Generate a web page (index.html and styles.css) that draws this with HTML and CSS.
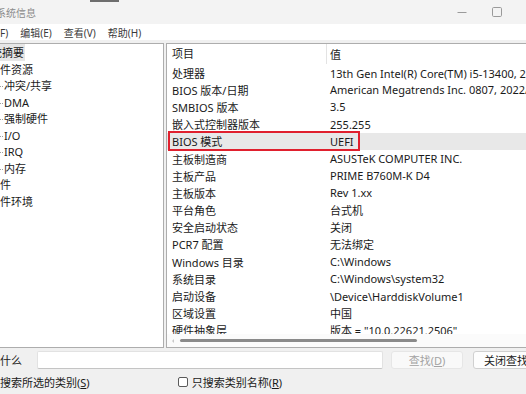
FILE: index.html
```html
<!DOCTYPE html>
<html lang="zh-CN">
<head>
<meta charset="utf-8">
<title>系统信息</title>
<link rel="stylesheet" href="styles.css">
</head>
<body>
<div class="window">
  <div class="titlebar">
    <span class="title">系统信息</span>
    <span class="grip"></span>
    <span class="spacer"></span>
    <span class="cap"><svg width="10" height="10" viewBox="0 0 10 10"><path d="M0.5 5.5H9.5" stroke="#9a9a9a" stroke-width="1"/></svg></span>
    <span class="cap"><svg width="10" height="10" viewBox="0 0 10 10"><rect x="0.5" y="0.5" width="9" height="9" rx="1.2" fill="none" stroke="#9a9a9a" stroke-width="1"/></svg></span>
    <span class="cap"></span>
  </div>
  <div class="menubar">
    <span class="menu first">文件(F)</span>
    <span class="menu">编辑(E)</span>
    <span class="menu">查看(V)</span>
    <span class="menu">帮助(H)</span>
  </div>
  <div class="main">
    <div class="tree">
      <div class="tree-inner">
        <div class="node lvl0"><span class="sel">系统摘要</span></div>
        <div class="node lvl1">硬件资源</div>
        <div class="node lvl2">冲突/共享</div>
        <div class="node lvl2">DMA</div>
        <div class="node lvl2">强制硬件</div>
        <div class="node lvl2">I/O</div>
        <div class="node lvl2">IRQ</div>
        <div class="node lvl2">内存</div>
        <div class="node lvl1">组件</div>
        <div class="node lvl1">软件环境</div>
      </div>
    </div>
    <div class="list">
      <div class="header">
        <div class="c1">项目</div>
        <div class="c2">值</div>
      </div>
      <div class="rows">
        <div class="row"><div class="c1">处理器</div><div class="c2">13th Gen Intel(R) Core(TM) i5-13400, 2500 Mhz, 10 个内核, 16 个逻辑处理器</div></div>
        <div class="row"><div class="c1">BIOS 版本/日期</div><div class="c2">American Megatrends Inc. 0807, 2022/11/10</div></div>
        <div class="row"><div class="c1">SMBIOS 版本</div><div class="c2">3.5</div></div>
        <div class="row"><div class="c1">嵌入式控制器版本</div><div class="c2">255.255</div></div>
        <div class="row selected"><div class="c1">BIOS 模式</div><div class="c2">UEFI</div><span class="mark"></span></div>
        <div class="row"><div class="c1">主板制造商</div><div class="c2">ASUSTeK COMPUTER INC.</div></div>
        <div class="row"><div class="c1">主板产品</div><div class="c2">PRIME B760M-K D4</div></div>
        <div class="row"><div class="c1">主板版本</div><div class="c2">Rev 1.xx</div></div>
        <div class="row"><div class="c1">平台角色</div><div class="c2">台式机</div></div>
        <div class="row"><div class="c1">安全启动状态</div><div class="c2">关闭</div></div>
        <div class="row"><div class="c1">PCR7 配置</div><div class="c2">无法绑定</div></div>
        <div class="row"><div class="c1">Windows 目录</div><div class="c2">C:\Windows</div></div>
        <div class="row"><div class="c1">系统目录</div><div class="c2">C:\Windows\system32</div></div>
        <div class="row"><div class="c1">启动设备</div><div class="c2">\Device\HarddiskVolume1</div></div>
        <div class="row"><div class="c1">区域设置</div><div class="c2">中国</div></div>
        <div class="row"><div class="c1">硬件抽象层</div><div class="c2">版本 = "10.0.22621.2506"</div></div>
      </div>
      <div class="hscroll">
        <span class="arrow"></span>
        <span class="thumb"></span>
      </div>
    </div>
  </div>
  <div class="find">
    <span class="label">查找什么</span>
    <span class="input"></span>
    <span class="btn disabled"><span>查找(<u>D</u>)</span></span>
    <span class="btn"><span>关闭查找</span></span>
  </div>
  <div class="checks">
    <label class="check first"><span class="box"></span><span>只搜索所选的类别(<u>S</u>)</span></label>
    <label class="check second"><span class="box"></span><span>只搜索类别名称(<u>R</u>)</span></label>
  </div>
</div>
</body>
</html>
```
FILE: styles.css
```css
* { box-sizing: border-box; }
html, body {
  margin: 0;
  padding: 0;
  width: 526px;
  height: 394px;
  overflow: hidden;
  background: #f0f0f0;
}
.window {
  font-family: "Noto Sans", "Noto Sans CJK SC", sans-serif;
  font-size: 11px;
  color: #1a1a1a;
  width: 526px;
  height: 394px;
  display: flex;
  flex-direction: column;
  overflow: hidden;
}
.titlebar {
  height: 24px;
  flex: none;
  background: #f3f3f3;
  display: flex;
  align-items: center;
  white-space: nowrap;
}
.title {
  margin-left: -4px;
  color: #8a8a8a;
  font-size: 10px;
}
.grip {
  align-self: flex-start;
  margin-left: 54px;
  width: 29px;
  height: 2px;
  background: #6e6e6e;
}
.spacer { flex: 1; }
.cap {
  width: 35px;
  height: 24px;
  display: flex;
  align-items: center;
  justify-content: center;
  flex: none;
}
.cap:last-child { width: 12px; }
.menubar {
  height: 16px;
  flex: none;
  background: #ffffff;
  display: flex;
  align-items: center;
  gap: 12px;
  white-space: nowrap;
  color: #3a3a3a;
  font-size: 10px;
}
.menu.first { margin-left: -23px; }
.main {
  margin-top: 3px;
  height: 305px;
  flex: none;
  display: flex;
  gap: 2px;
}
.tree {
  margin-left: -1px;
  width: 165px;
  flex: none;
  background: #ffffff;
  border: 1px solid #adadad;
  overflow: hidden;
  white-space: nowrap;
}
.tree-inner {
  margin-left: -40px;
  padding-top: 1px;
}
.node {
  height: 16.55px;
  line-height: 16.55px;
  position: relative;
}
.lvl0 { padding-left: 19px; }
.lvl1 { padding-left: 29px; }
.lvl2 { padding-left: 44px; }
.lvl2::before {
  content: "";
  position: absolute;
  left: 40px;
  top: 8px;
  width: 3px;
  border-top: 1px dotted #a0a0a0;
}
.sel {
  background: #e6e6e6;
  padding: 1px 1px;
}
.list {
  flex: 1;
  min-width: 0;
  background: #ffffff;
  border: 1px solid #adadad;
  border-right: none;
  display: flex;
  flex-direction: column;
  overflow: hidden;
}
.header {
  height: 20px;
  flex: none;
  display: flex;
  align-items: center;
  white-space: nowrap;
}
.header .c1 {
  border-right: 1px solid #e3e3e3;
  height: 20px;
  line-height: 20px;
}
.rows {
  flex: 1;
  min-height: 0;
  overflow: hidden;
}
.row {
  height: 17.2px;
  display: flex;
  align-items: center;
  white-space: nowrap;
  position: relative;
}
.c1 {
  width: 160px;
  flex: none;
  padding-left: 5px;
  overflow: hidden;
}
.c2 {
  padding-left: 3px;
  flex: none;
}
.row.selected { background: #e8e8e8; }
.mark {
  position: absolute;
  left: 1px;
  top: -2px;
  width: 192px;
  height: 20px;
  border: 2px solid #e0202e;
}
.hscroll {
  height: 13px;
  flex: none;
  background: #fbfbfb;
  display: flex;
  align-items: center;
}
.arrow {
  margin-left: 5px;
  width: 0;
  height: 0;
  border-top: 2px solid transparent;
  border-bottom: 2px solid transparent;
  border-right: 2px solid #c8c8c8;
}
.thumb {
  margin-left: 6px;
  width: 237px;
  height: 3px;
  border-radius: 2px;
  background: #8a8a8a;
}
.find {
  margin-top: 3px;
  height: 18px;
  flex: none;
  display: flex;
  align-items: center;
  white-space: nowrap;
}
.label {
  margin-left: -22px;
  width: 59px;
  flex: none;
}
.input {
  width: 346px;
  height: 18px;
  flex: none;
  background: #ffffff;
  border: 1px solid #e2e2e2;
  border-bottom-color: #c4c4c4;
  border-radius: 2px;
}
.btn {
  height: 18px;
  width: 72px;
  flex: none;
  display: flex;
  align-items: center;
  justify-content: center;
  border: 1px solid #d0d0d0;
  border-radius: 3px;
  background: #fdfdfd;
}
.btn.disabled {
  color: #a3a3a3;
  border-color: #e6e6e6;
  background: #f9f9f9;
  margin-left: 8px;
}
.btn + .btn { margin-left: 10px; padding-right: 6px; }
.btn u, .check u { text-decoration: underline; text-underline-offset: 1px; }
.checks {
  height: 22px;
  margin-top: 2px;
  flex: none;
  display: flex;
  align-items: center;
  white-space: nowrap;
}
.check {
  display: flex;
  align-items: center;
  gap: 3px;
}
.check.first { margin-left: -25px; }
.check.second { margin-left: 88px; }
.box {
  width: 10px;
  height: 10px;
  border: 1px solid #5a5a5a;
  border-radius: 2px;
  background: #ffffff;
  margin-right: 1px;
}
```
